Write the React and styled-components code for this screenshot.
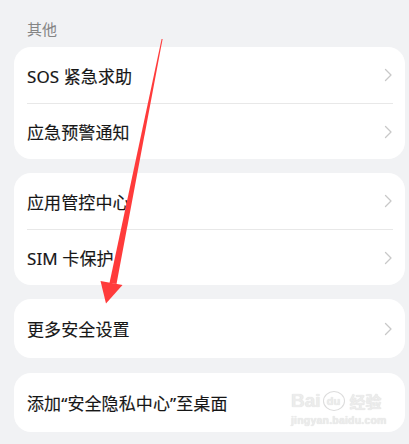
import React from 'react'
import styled, { createGlobalStyle } from 'styled-components'

const GlobalStyle = createGlobalStyle`
  html, body {
    margin: 0;
    padding: 0;
    background: #f1f2f4;
  }
  body {
    font-family: "Noto Sans", "Noto Sans CJK SC", sans-serif;
  }
`

const Page = styled.div`
  position: relative;
  width: 409px;
  height: 444px;
  overflow: hidden;
  box-sizing: border-box;
  padding: 20px 4px 0 14px;
  background: #f1f2f4;
`

const SectionLabel = styled.div`
  padding-left: 13px;
  height: 18px;
  line-height: 18px;
  font-size: 15px;
  color: #858585;
  margin-bottom: 9px;
`

const Card = styled.div`
  background: #ffffff;
  border-radius: 17px;
  margin-bottom: ${props => props.gap || 14}px;
`

const Row = styled.div`
  display: flex;
  align-items: center;
  justify-content: space-between;
  height: ${props => props.h || 56}px;
  margin: 0 12px 0 13px;
  border-top: ${props => (props.divided ? '1px solid #e8e8e8' : 'none')};
  box-sizing: border-box;
`

const Title = styled.span`
  font-size: 17px;
  color: #161616;
  letter-spacing: 0.1px;
  -webkit-text-stroke: 0.15px #161616;
`

const Chevron = () => (
  <svg width="9" height="14" viewBox="0 0 9 14" fill="none">
    <path d="M1.5 1.5L7 7l-5.5 5.5" stroke="#c8c8c8" strokeWidth="1.3" strokeLinecap="round" strokeLinejoin="round" />
  </svg>
)

const Overlay = styled.svg`
  position: absolute;
  left: 0;
  top: 0;
  pointer-events: none;
`

const Watermark = styled.div`
  position: absolute;
  left: 291px;
  top: 390px;
  color: #ececec;
  font-family: "Liberation Sans", sans-serif;
  text-shadow: 0 0 1px #d6d6d6;
`

const WmBrand = styled.div`
  display: flex;
  align-items: center;
  gap: 2px;
  font-size: 19px;
  font-weight: bold;
  line-height: 22px;

  span.cn {
    font-family: "Noto Sans CJK SC", sans-serif;
    font-size: 16px;
    margin-left: 3px;
  }
`

const WmDu = styled.span`
  display: inline-flex;
  align-items: center;
  justify-content: center;
  width: 20px;
  height: 18px;
  border-radius: 50%;
  border: 1px solid #dcdcdc;
  font-size: 11px;
`

const WmSite = styled.div`
  font-size: 10.5px;
  font-weight: bold;
  margin-top: 2px;
  letter-spacing: 0.2px;
`

const groups = [
  { items: ['SOS 紧急求助', '应急预警通知'] },
  { items: ['应用管控中心', 'SIM 卡保护'] },
  { items: ['更多安全设置'], h: 59, gap: 15 },
  { items: ['添加“安全隐私中心”至桌面'], h: 59, noChevron: true },
]

export default function App() {
  return (
    <>
      <GlobalStyle />
      <Page>
        <SectionLabel>其他</SectionLabel>
        {groups.map((g, gi) => (
          <Card key={gi} gap={g.gap}>
            {g.items.map((label, i) => (
              <Row key={label} divided={i > 0} h={g.h}>
                <Title>{label}</Title>
                {!g.noChevron && <Chevron />}
              </Row>
            ))}
          </Card>
        ))}
        <Watermark>
          <WmBrand>
            Bai<WmDu>du</WmDu>
            <span className="cn">经验</span>
          </WmBrand>
          <WmSite>jingyan.baidu.com</WmSite>
        </Watermark>
        <Overlay width="409" height="444" viewBox="0 0 409 444">
          <polygon points="161.6,39 162.6,39 116.5,284 109.5,283" fill="#ff3b3b" />
          <polygon points="100.5,281 122.5,285 106,303.5" fill="#ff3b3b" />
        </Overlay>
      </Page>
    </>
  )
}
